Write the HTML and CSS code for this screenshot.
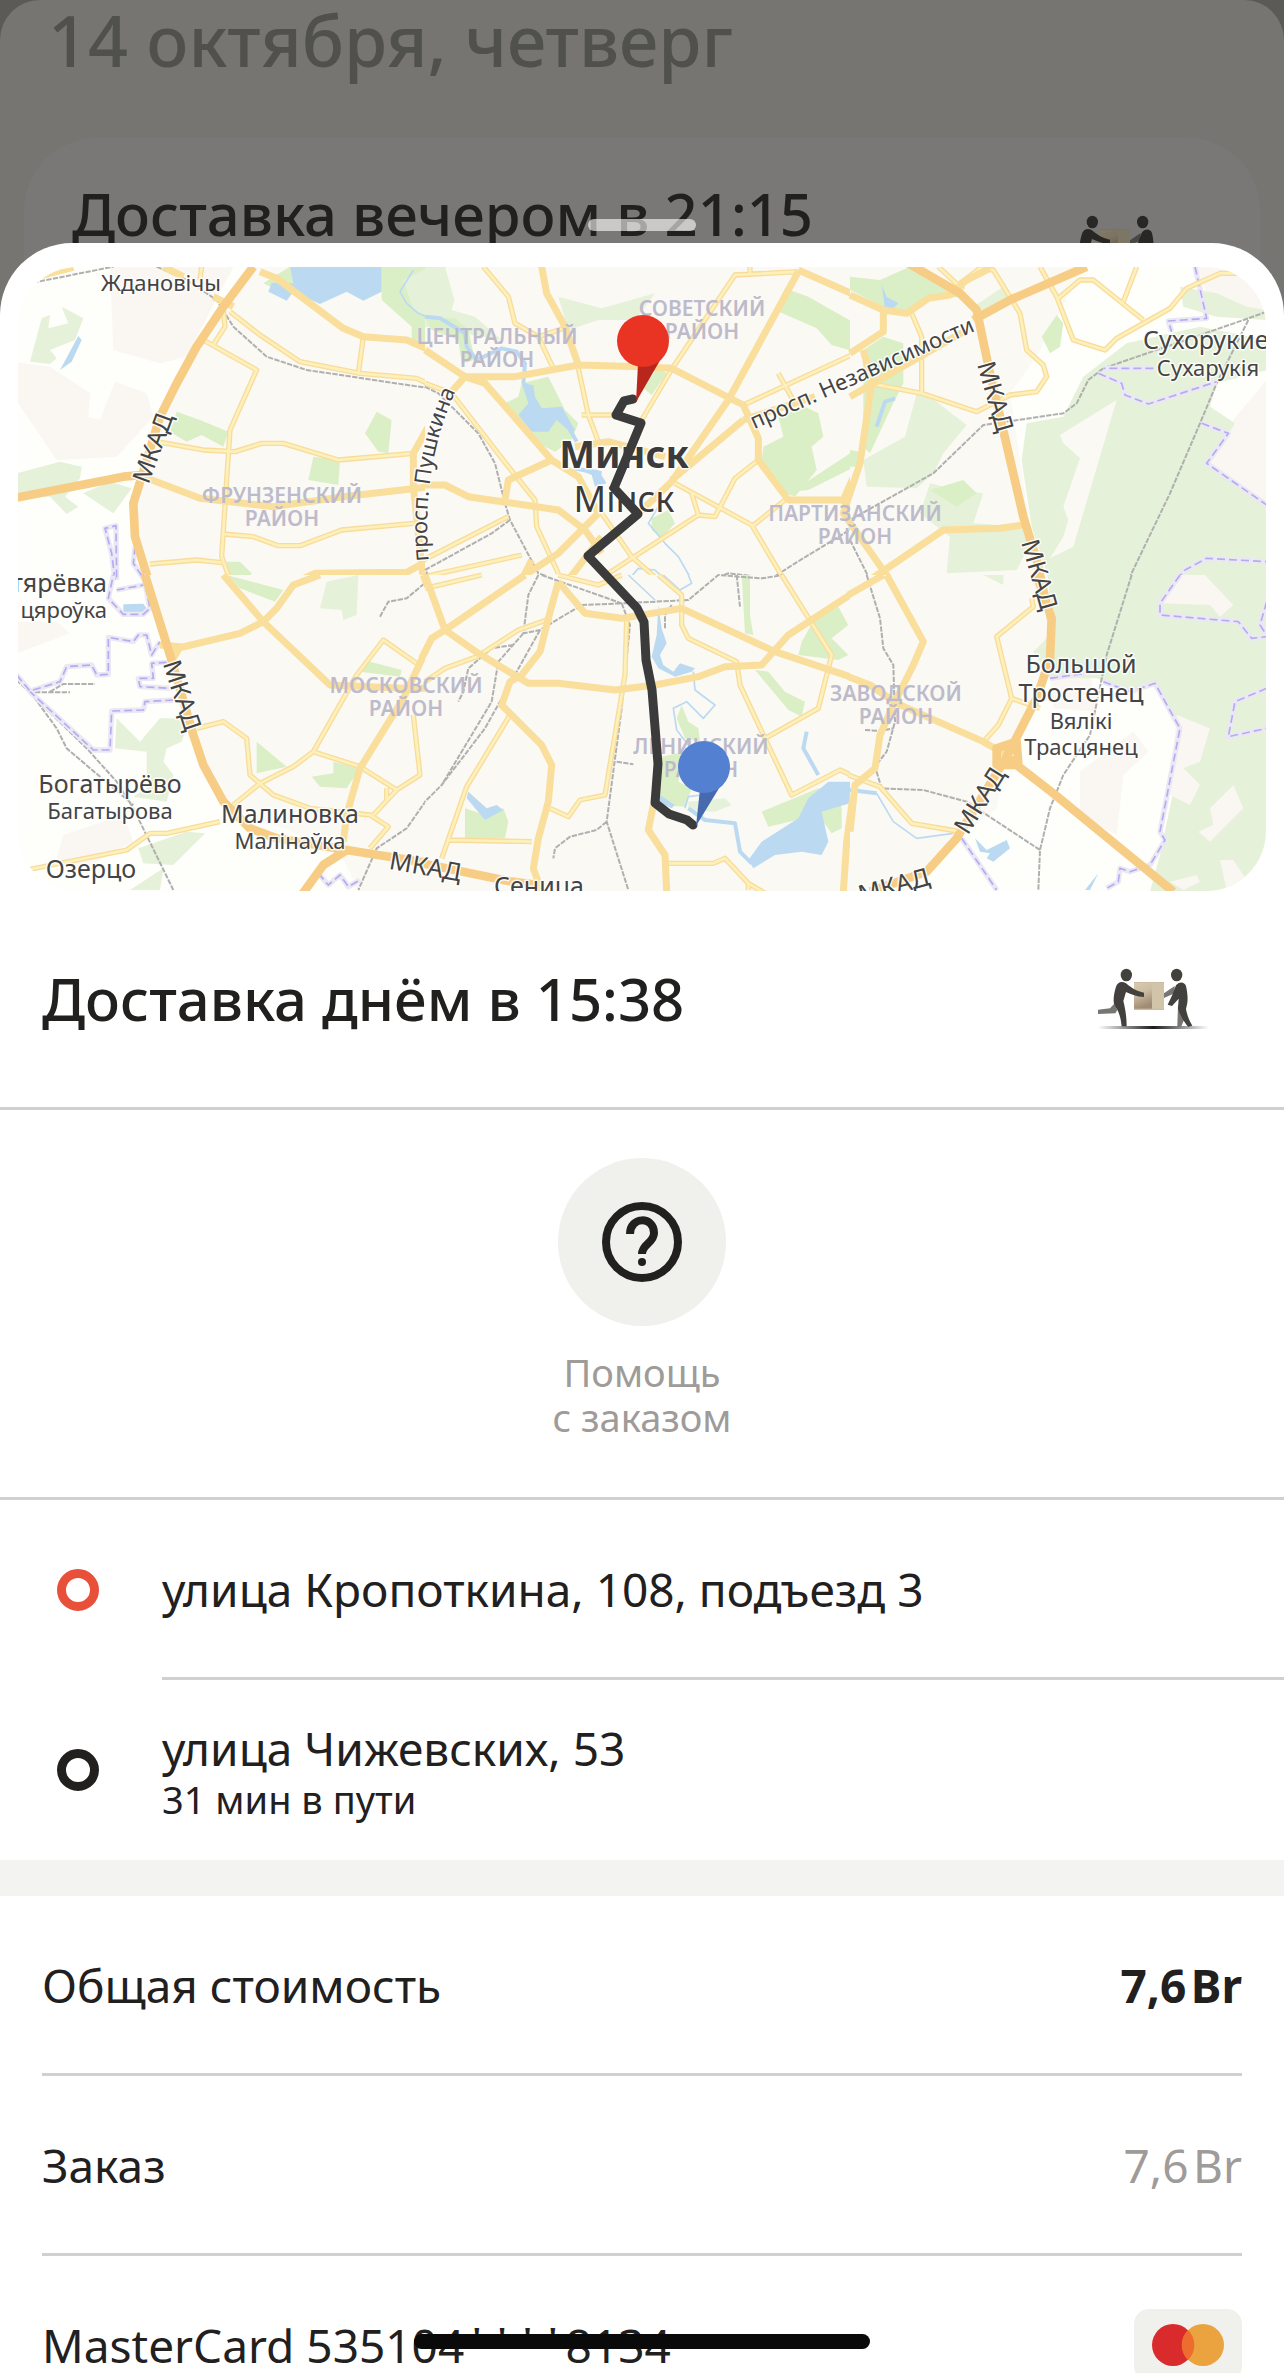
FILE: index.html
```html
<!DOCTYPE html>
<html lang="ru">
<head>
<meta charset="utf-8">
<meta name="viewport" content="width=device-width, initial-scale=1">
<title>Доставка</title>
<link rel="stylesheet" href="styles.css">
</head>
<body>
<svg class="defs" aria-hidden="true">
  <defs>
    <linearGradient id="boxFill" x1="0" y1="0" x2="0.3" y2="1"><stop offset="0" stop-color="#d8cab0"/><stop offset=".45" stop-color="#cdbea2"/><stop offset="1" stop-color="#a08c74"/></linearGradient>
    <linearGradient id="ground"><stop offset="0" stop-color="#222" stop-opacity="0"/><stop offset=".5" stop-color="#1c1b1a"/><stop offset="1" stop-color="#222" stop-opacity="0"/></linearGradient>
    <symbol id="couriers" viewBox="174 114 336 186">
      <path fill="#777672" d="M174 239 210 235 222 222 232 240 226 250 174 252ZM372 190 404 168 404 190 372 204ZM414 225 430 240 432 270 424 289H412Z"/>
      <path fill="#cbbd9f" d="M282 156H372V240H282Z"/>
      <path fill="url(#boxFill)" d="M282 159H336V236H282Z"/>
      <path fill="#d1c4a8" d="M336 159H372V236H336Z"/>
      <ellipse cx="259" cy="135" rx="17" ry="19" fill="#42413d"/>
      <ellipse cx="410" cy="135" rx="17" ry="19" fill="#42413d"/>
      <path fill="#42413d" d="M228 170C232 156 246 152 258 160 278 176 290 184 312 188V201C290 200 274 194 258 186L250 213C256 236 260 262 260 289H245C242 264 238 246 226 230 218 220 220 196 228 170ZM408 166C416 154 434 154 438 168 442 186 444 204 442 218L438 238C442 258 448 272 457 287L444 290C430 272 420 256 414 236L416 206 396 228 383 224Q398 196 408 166Z"/>
      <path fill="url(#ground)" d="M174 288H506V297H174Z"/>
    </symbol>

    <path id="minorA" d="M470 545 610 570 705 575 785 550 850 550 1015 600 1240 580M610 240 770 330 690 510 680 660 665 890 690 960M640 255 675 200 670 150M690 155 780 225 900 305 1080 340 1250 355 1300 378M1090 230 1075 340M670 822 760 830 835 857 900 857 1025 810 1240 790M450 912 590 900 665 908M605 20 600 60"/>
    <path id="minorB" d="M175 20 250 110 270 190 340 230 430 200M340 230 385 325M460 325 490 465 520 545M470 465H570M1060 340 1110 430M650 480 745 320 930 45 1120 35M975 20V40M0 370 80 400 250 620 330 720 335 800 400 940M-5 900 250 770M0 950 290 885M520 960 820 765 870 770 930 655 1000 600M750 670 980 795 1075 955M800 700 820 765M980 800 1080 720M955 435 1290 280M530 760 620 890 700 960"/>
    <path id="minorC" d="M185 160 215 230V400M60 370 215 400 380 455 480 405 560 395 590 350 580 315 530 270 510 160 430 30 390 25 330 70M570 20 620 110 670 240 765 270 800 235 960 145 1010 85 1110 40H1190M625 115 690 60H730L880 180M860 20 820 125M265 20 340 90"/>
    <path id="minorD" d="M590 460 670 440 740 490 750 600 820 660 930 700 1110 720 1165 755 1110 820M780 625 880 575 940 530 1070 300 1150 195 1250 265M940 530 1080 575 1190 645 1120 720M1190 645 1260 600 1240 420M80 885 380 825 450 775 500 775 660 740M700 690 780 625M1160 640V680"/>
    <path id="minorE" d="M0 40 170 0M400 0 520 30 590 0M700 0 770 60V150L790 190 935 260 945 330 1020 490 1180 400 1220 240 1070 0M1020 490 1100 660 1245 585 1290 605M605 130 600 300 540 660 465 675 430 725 375 700M0 320 60 280 155 245 280 165 380 130M255 420 125 635 50 850M70 795 320 800M720 865H865L900 850 970 925V945M970 925 1020 955"/>
    <path id="minorF" d="M-5 600 90 635 185 745 320 768M405 495 445 450 485 370 440 185 550 95 545 70M485 370 570 400"/>
  </defs>
</svg>

<main class="screen">
  <section class="history" aria-hidden="true">
    <h2 class="history-date">14 октября, четверг</h2>
    <div class="history-card">
      <h3 class="title">Доставка вечером в 21:15</h3>
      <svg class="couriers"><use href="#couriers"/></svg>
    </div>
  </section>

  <article class="sheet">
    <span class="grabber"></span>
    <svg class="map" viewBox="18 267 1248 624" role="img" aria-label="Маршрут доставки, Минск">
      <rect class="land" x="18" y="267" width="1248" height="624"/>

      <g transform="translate(0 260) scale(.333333)">
        <path class="soil" d="M0 300 150 320 270 400 265 470 300 480 345 365 440 400 460 470 350 590 170 600 55 430ZM330 20 700 20 560 290 480 310 340 270Z"/>
        <path class="city" d="M760 20H1290V960H450L400 800 430 650 500 420Z"/>
        <path class="wood" d="M90 305 125 175 150 165 145 205 205 190 185 140 250 175 225 240 150 270 170 295 150 312ZM50 640 180 605 245 620 240 655 195 710 235 740 200 762 150 710H50ZM250 700 330 665 395 685 340 760Z"/>
        <path class="park" d="M790 70 870 20 890 60 850 100ZM1145 20H1290V260H1235V200L1145 120ZM530 455 600 480 685 515 670 560 605 525 560 545 510 515ZM1130 455 1175 480 1165 580 1135 575 1095 520ZM940 590 1020 600 1015 675 925 660ZM680 905 720 905 755 940 740 965H680Z"/>
        <path class="wood" d="M1210 60 1290 20V170L1240 150Z"/>
        <path class="water" d="M870 20H1145V95L1090 122 1040 95 960 132 880 95 860 122 805 95 815 68 880 70ZM235 228 245 240 215 305 180 330Z"/>
        <path class="stream" d="M1240 30 1200 95 1220 130 1255 160 1290 175"/>
        <path class="rail" d="M80 72 340 20M470 20 560 60 650 120 700 200 800 290 920 330 1290 385"/>
        <path class="border-halo" d="M345 960 335 880 315 805 348 797 350 960M405 860 400 910 430 955"/>
        <path class="border" d="M345 960 335 880 315 805 348 797 350 960M405 860 400 910 430 955"/>
        <use href="#minorA" class="minor"/><use href="#minorA" class="minor-core"/>
        <path class="mid" d="M780 35 830 55 1030 205 1090 230 1220 240 1300 275M430 650 600 715 820 740 1030 710 1290 680M900 960 945 940 1220 937 1260 915M1240 680 1240 580 1290 490M1240 680 1270 960"/>
        <path class="mid" d="M110 50 220 22M490 20 550 50M640 110 700 140"/>
        <path class="major" d="M760 20 670 140 590 260 530 370 480 470 425 650 400 730 405 830 445 960 495 1130M50 713 370 650 425 645"/>
      </g>

      <g transform="translate(425 260) scale(.333333)">
        <path class="city" d="M0 20H1290V960H0Z"/>
        <path class="wood" d="M0 20H60L88 120 80 150 150 170 230 240 0 200ZM400 110 530 145 690 100 630 180 520 180 430 210Z"/>
        <path class="park" d="M0 170 90 175 130 210 150 300 110 310 100 240 20 210ZM290 370 370 350 420 450 460 490 440 540 390 575 330 545 240 430 280 410ZM700 320 725 340 680 405 655 385ZM1080 85 1150 110 1290 190V275L1220 255 1175 205 1050 150ZM1060 470 1140 440 1180 460 1195 530 1160 560 1175 630 1110 710 1080 700 1010 600 1015 560 1075 530ZM1100 695 1290 570V620L1150 690ZM680 775 730 750 750 790 710 835 680 810Z"/>
        <path class="water" d="M290 370 325 375 330 410 350 445 410 440 450 510 440 520 395 480 370 515 320 515 280 465 310 430ZM440 620 520 630 545 670 510 680 500 645Z"/>
        <path class="river" d="M0 170 45 175 120 220 125 260 155 300 230 265 275 275 300 310 295 370M300 370 320 430 340 490 380 460 430 500 455 545M445 625 530 640"/>
        <path class="stream" d="M700 740 670 790 720 850 760 890 800 960M610 960 640 925 690 930 720 960"/>
        <path class="rail" d="M0 380 40 400 160 520 210 610 240 730 255 780 340 940 400 960M255 780 200 820 0 930M860 960 910 940 1040 955 1110 910 1290 800"/>
        <use href="#minorB" class="minor"/><use href="#minorB" class="minor-core"/>
        <path class="mid" d="M350 20 365 100 420 200 460 315 650 320 740 325 955 435 1000 535V600L1090 720H1255L1290 640M0 270 120 350 270 350 460 315M80 395 120 350 180 370 250 450 380 600 460 650 520 760M380 600 250 660 240 720M450 560 550 545 720 590M740 660 955 480M1120 35 910 420 740 665 640 760M1120 30 1290 105M955 480 1170 410M0 675H60L130 710 400 750 480 810 530 880M520 760 400 880 300 945 320 960M290 960 320 900M530 830 430 960M1255 720 1290 770"/>
      </g>

      <g transform="translate(850 260) scale(.333333)">
        <path class="city" d="M0 20H700L560 290 480 400 540 800 600 960H0Z"/>
        <path class="soil" d="M1040 20H1250V160L1150 170 1080 130ZM1150 480 1250 360V740L1080 610Z"/>
        <path class="wood" d="M700 350 830 250 1050 200 1250 240V330L1100 370 1080 440 1155 490 1080 610 1250 735V970H600L545 800 515 600 530 490 640 470ZM200 400 240 410 350 495 280 580 250 640 200 685 50 680 40 600 165 530ZM990 80 1100 100 1190 140 1250 150V180L1100 170 1000 140ZM210 760 240 670 320 690 400 700 370 790 520 800 540 850 500 930 290 940 300 830ZM370 140 460 80 480 120 440 150 390 160Z"/>
        <path class="city" d="M800 420 630 525 640 550 690 595 640 740 655 780 640 830 600 895 670 860Z"/>
        <path class="park" d="M0 50 90 60 180 20 330 110 240 120 180 165 100 140 0 90ZM40 270 100 230 160 250V370L130 430 60 580 40 560ZM575 230 620 165 640 190 630 260 600 280ZM0 570 30 575V620H0ZM240 690 340 660 380 700 320 740Z"/>
        <path class="water" d="M95 75 110 110 145 130 130 145 105 145Z"/>
        <path class="river" d="M135 415 105 425 80 500"/>
        <path class="rail" d="M1250 155 1195 175 760 325 715 360 680 430 640 460 400 495 250 640 0 780M1195 180 1100 370 1050 490 960 700 835 960M0 840 60 960"/>
        <path class="border-halo" d="M1035 20 1070 175 955 183 965 215M910 325 760 325M745 340 815 370 825 405 895 432 1100 365M1055 490 1135 520 1070 610 1250 735M980 960 1005 930 1070 895 1250 905"/>
        <path class="border" d="M1035 20 1070 175 955 183 965 215M910 325 760 325M745 340 815 370 825 405 895 432 1100 365M1055 490 1135 520 1070 610 1250 735M980 960 1005 930 1070 895 1250 905"/>
        <use href="#minorC" class="minor"/><use href="#minorC" class="minor-core"/>
        <path class="mid" d="M0 105 100 150 170 160 235 115 300 105 350 60 420 25M100 150V215L0 280M40 270 65 370 30 610 -20 760 120 960M60 960 280 810 450 805 520 795M0 410 350 210"/>
        <path class="major" d="M175 10 330 100 380 150 420 340 520 770 560 900 600 1080M370 180 480 120 710 20"/>
      </g>

      <g transform="translate(0 575) scale(.333333)">
        <path class="city" d="M430 0H1290V960H1080L1020 830 680 690 560 430 510 250Z"/>
        <path class="soil" d="M50 140 170 140 210 175 50 235ZM190 780 370 720 400 800 250 880 170 850Z"/>
        <path class="wood" d="M350 430 420 500 480 430 570 430 545 500 500 520 490 560 520 600 500 680 400 665 440 640 440 530 345 520ZM415 820 560 770 615 775 520 870 430 865ZM490 880 480 945H390ZM980 20 1075 0 1070 120 1030 135 1025 105 960 100Z"/>
        <path class="park" d="M680 0 850 45 825 80 720 40ZM770 500 860 575 770 595ZM1000 560 1080 580 1040 640 960 635 935 605 1000 595ZM1110 260 1205 285 1200 305 1080 290Z"/>
        <path class="water" d="M370 88 430 86 440 100 430 115 370 115Z"/>
        <path class="rail" d="M50 315 260 520 350 620 400 700 520 945M90 350 170 460 200 520 400 690M105 352H210M150 350 190 327H285M1290 660 1220 760 1130 820 1075 945M1140 125 1165 80 1220 70 1280 20V-15"/>
        <path class="border-halo" d="M430 0 450 100 430 118 370 118 325 70 340 0M350 45 430 30M50 300 90 348 180 320 200 275 275 270 290 300 325 298V187L400 200 415 180 440 180 455 240 480 200M500 262 455 265 460 310 415 310 420 335 515 340M520 375 435 380 430 405 335 408 330 525H280L90 350M955 895 985 930 1020 900 1045 935 1080 915"/>
        <path class="border" d="M430 0 450 100 430 118 370 118 325 70 340 0M350 45 430 30M50 300 90 348 180 320 200 275 275 270 290 300 325 298V187L400 200 415 180 440 180 455 240 480 200M500 262 455 265 460 310 415 310 420 335 515 340M520 375 435 380 430 405 335 408 330 525H280L90 350M955 895 985 930 1020 900 1045 935 1080 915"/>
        <use href="#minorD" class="minor"/><use href="#minorD" class="minor-core"/>
        <path class="mid" d="M670 0 790 140 990 330 1210 340 1290 340M510 225 720 175 790 140 830 100 880 30 960 0M1300 180 1210 370 1080 580 1040 720 1030 800M1270 0 1300 80M480 210 540 215 520 250"/>
        <path class="major" d="M435 0 510 240 580 480 610 570 670 680 750 760 830 790 1040 825 1290 865 1550 925M1040 825 970 870 905 960"/>
      </g>

      <g transform="translate(425 575) scale(.333333)">
        <path class="city" d="M0 0H1290V950H0Z"/>
        <path class="park" d="M950 0H975V120L985 180 960 175ZM1130 200 1170 130 1240 95 1270 150 1220 190 1270 240 1240 255 1120 240ZM990 285 1030 290 1080 350 1140 380 1130 425 1090 405ZM770 390 790 440 820 460 825 500 780 490 755 430ZM710 545 780 530 760 620 800 640 780 695 700 690ZM120 700 180 720 235 700 250 740 240 790H120ZM1010 710 1180 640 1230 650 1250 700V760L1220 775 1180 720 1030 755Z"/>
        <path class="wood" d="M790 680 900 670 920 690 870 710 790 705Z"/>
        <path class="water" d="M130 650 185 700 215 690 235 705 180 735 125 670ZM700 90 710 160 725 205 705 240 715 270 745 290 765 265 810 280 800 290 750 305 700 280 680 245 695 180ZM1150 670 1210 620 1290 620V680L1190 710 1210 800 1190 840 1130 830 1050 840 985 880 970 855 1010 800 1120 730ZM705 660 750 690 740 700 700 680Z"/>
        <path class="river" d="M790 700 840 735 930 745 945 830 980 865M1145 470 1135 520 1180 600"/>
        <path class="stream" d="M610 0 690 75M715 0 765 45 800 25 790 0M805 290 810 345 870 390 835 430 785 380 745 400 755 465 790 510M780 700 790 665 830 660"/>
        <path class="rail" d="M350 0 590 85 790 75 880 0 1010 10 1075 0M740 90 720 120V160M340 0 310 60 295 175 345 165 470 90 590 85 615 150 590 400 545 740 610 945M345 165 180 460 50 630 0 680M295 175 220 260 200 380 50 630M265 210 200 220 130 280 115 350 100 380M545 740 515 765 435 785 390 820 385 850M575 560 625 568M935 0 945 95"/>
        <use href="#minorE" class="minor"/><use href="#minorE" class="minor-core"/>
        <path class="mid" d="M0 0 60 165 160 235 310 325 400 325 570 345 690 330 820 305 900 275 1010 270 1090 180 1290 50M-10 250 20 190 60 165 300 0M400 20 370 130 345 230 290 300 255 320 230 390 350 510 380 570 370 680 340 790 325 880 350 950M400 20 480 115 590 130 770 100 1050 230 1290 310M685 690 670 765 720 840 725 950M1290 620 1265 800 1255 950"/>
        <path class="major" d="M-10 865 260 920 340 930"/>
      </g>

      <g transform="translate(850 575) scale(.333333)">
        <path class="city" d="M0 0H570L610 260 480 500 440 700 340 780 230 900 0 950Z"/>
        <path class="soil" d="M690 590 850 470 895 530 820 600 800 780 690 720ZM600 310 720 290 740 410 610 400Z"/>
        <path class="wood" d="M595 0H1250V950H900L930 840 980 600 990 460 915 320 840 350 740 310 600 310 550 230 600 180ZM400 0H460V30Z"/>
        <path class="soil" d="M985 0H1065L1150 90 1110 125 1080 90 930 85ZM980 420 1080 460 1050 560 1000 580 1050 630 1020 690 960 660ZM1150 630 1180 700 1080 800 1045 770 1090 750 1080 700ZM1110 855H1150L1190 915 1130 945ZM960 920 1040 900 1050 920 1000 945Z"/>
        <path class="water" d="M375 790 410 825 470 795 480 820 430 860 410 850 420 835 390 830ZM745 895 720 945H705Z"/>
        <path class="river" d="M0 645 80 655"/>
        <path class="stream" d="M80 655 130 740 200 790 310 775"/>
        <path class="rail" d="M50 0 90 130 100 220 130 270 135 440 110 530 75 575 95 640 220 645 350 680 570 825M845 0 770 240 720 480 640 600 600 700 570 825 565 945M45 465 90 468 130 460"/>
        <path class="border-halo" d="M990 0 930 85V120L1165 140 1205 190 1250 185M1250 80 1230 150 1250 180M600 310 740 290M760 320 840 350 915 325 990 460 930 770 945 795 900 870 840 890 810 880 805 920 770 940M1250 340 1155 380 1135 485 1250 460M335 790 440 945"/>
        <path class="border" d="M990 0 930 85V120L1165 140 1205 190 1250 185M1250 80 1230 150 1250 180M600 310 740 290M760 320 840 350 915 325 990 460 930 770 945 795 900 870 840 890 810 880 805 920 770 940M1250 340 1155 380 1135 485 1250 460M335 790 440 945"/>
        <use href="#minorF" class="minor"/><use href="#minorF" class="minor-core"/>
        <path class="mid" d="M-5 305 60 330 140 385 400 500 470 540M-5 60 100 0M110 0 220 200 190 270 130 390 90 480 75 580 15 630 0 770"/>
        <path class="major" d="M560 0 605 130 600 250 560 370 470 545 400 660 320 790 230 890 60 950M470 545 500 570 610 655 970 950M440 520 500 500 505 570 440 570Z"/>
      </g>

      <g class="place">
        <text x="161" y="291">Ждановічы</text><text x="126" y="264">Ждановичи</text>
        <text class="place-lg" x="107" y="592" text-anchor="end">тярёвка</text><text x="107" y="618" text-anchor="end">цяроўка</text>
        <text class="place-lg" x="110" y="793">Богатырёво</text><text x="110" y="819">Багатырова</text>
        <text class="place-lg" x="290" y="823">Малиновка</text><text x="290" y="849">Малінаўка</text>
        <text class="place-lg" x="91" y="878">Озерцо</text><text x="91" y="905">Азярцо</text>
        <text class="place-lg" x="539" y="895">Сеница</text>
        <text class="place-lg place-start" x="1143" y="349">Сухорукие</text><text x="1208" y="376">Сухарукія</text>
        <text class="place-lg" x="1081" y="673">Большой</text><text class="place-lg" x="1081" y="702">Тростенец</text>
        <text x="1081" y="729">Вялікі</text><text x="1081" y="755">Трасцянец</text>
      </g>
      <g class="district">
        <text x="497" y="344">ЦЕНТРАЛЬНЫЙ</text><text x="497" y="367">РАЙОН</text>
        <text x="702" y="316">СОВЕТСКИЙ</text><text x="702" y="339">РАЙОН</text>
        <text x="282" y="503">ФРУНЗЕНСКИЙ</text><text x="282" y="526">РАЙОН</text>
        <text x="855" y="521">ПАРТИЗАНСКИЙ</text><text x="855" y="544">РАЙОН</text>
        <text x="406" y="693">МОСКОВСКИЙ</text><text x="406" y="716">РАЙОН</text>
        <text x="896" y="701">ЗАВОДСКОЙ</text><text x="896" y="724">РАЙОН</text>
        <text x="701" y="754">ЛЕНИНСКИЙ</text><text x="701" y="777">РАЙОН</text>
      </g>
      <g class="road-name">
        <text transform="translate(161 451) rotate(-70)">МКАД</text>
        <text transform="translate(174 698) rotate(72)">МКАД</text>
        <text transform="translate(987 399) rotate(74)">МКАД</text>
        <text transform="translate(1031 577) rotate(74)">МКАД</text>
        <text transform="translate(987 805) rotate(-58)">МКАД</text>
        <text transform="translate(424 875) rotate(10)">МКАД</text>
        <text transform="translate(896 894) rotate(-15)">МКАД</text>
      </g>
      <g class="street-name">
        <text transform="translate(865 380) rotate(-24)">просп. Независимости</text>
        <path id="pushkin" fill="none" d="M429 562Q420 470 456 390"/>
        <text><textPath href="#pushkin" startOffset="50%">просп. Пушкина</textPath></text>
      </g>
      <text class="city-name" x="624" y="468">Минск</text>
      <text class="city-name-alt" x="624" y="512">Мінск</text>

      <path class="route" d="M633 399 624 401 616 415 641 423 614 488 638 514 588 556 637 608 644 622 646 660 652 690 658 764 655 803 669 814 687 820 693 825"/>
      <path fill="#b9261b" d="M638 364 662 357 636 402Z"/><circle cx="643" cy="341" r="26" fill="#e93424"/>
      <path fill="#4769ad" d="M700 789 724 780 696 826Z"/><circle cx="704" cy="767" r="26" fill="#5480d2"/>
    </svg>

    <header class="summary">
      <h1 class="title">Доставка днём в 15:38</h1>
      <svg class="couriers" aria-hidden="true"><use href="#couriers"/></svg>
    </header>

    <div class="support">
      <button class="help" type="button">
        <span class="help-icon">
          <svg viewBox="0 0 80 80" aria-hidden="true"><circle cx="40" cy="40" r="36" fill="none" stroke="#21201f" stroke-width="8"/><path d="M28 32C28 14 52 14 52 31 52 41 40 42 40 52" fill="none" stroke="#21201f" stroke-width="8"/><circle cx="40" cy="60" r="4" fill="#21201f"/></svg>
        </span>
        <span>Помощь<br>с заказом</span>
      </button>
    </div>

    <ul class="stops">
      <li class="stop"><span class="ring ring-from"></span><div class="stop-text"><p>улица Кропоткина, 108, подъезд 3</p></div></li>
      <li class="stop"><span class="ring"></span><div class="stop-text"><p>улица Чижевских, 53</p><p class="stop-note">31 мин в пути</p></div></li>
    </ul>

    <dl class="bill">
      <div class="bill-row"><dt>Общая стоимость</dt><dd class="total">7,6&#8202;Br</dd></div>
      <div class="bill-row"><dt>Заказ</dt><dd class="muted">7,6&#8202;Br</dd></div>
      <div class="bill-row"><dt>MasterCard 535104****8134</dt><dd class="card-badge"><svg viewBox="0 0 108 72" role="img" aria-label="MasterCard"><circle cx="39" cy="36" r="21" fill="#d92b2b"/><circle cx="69" cy="36" r="21" fill="#eaa33e"/><path fill="#ee6c2e" d="M54 21A21 21 0 0 1 54 51 21 21 0 0 1 54 21Z"/></svg></dd></div>
    </dl>
  </article>
  <span class="home-indicator"></span>
</main>
</body>
</html>
```

FILE: styles.css
```css
* { box-sizing: border-box; }
body, h1, h2, h3, p, ul, dl, dd { margin: 0; padding: 0; }
body {
  background: #5b5a57;
  color: #21201f;
  font-family: "Noto Sans", "Open Sans", sans-serif;
  font-size: 46px;
  line-height: 58px;
}
.defs { position: absolute; width: 0; height: 0; }
.screen {
  position: relative;
  height: 100vh;
  overflow: hidden;
}

/* dimmed list behind the sheet */
.history {
  height: 320px;
  padding: 0 24px;
  border-radius: 40px 40px 0 0;
  background: #767572;
}
.history-date {
  height: 138px;
  padding-left: 24px;
  color: #50504c;
  font-size: 70px;
  line-height: 80px;
  font-weight: 500;
}
.history-card {
  display: flex;
  justify-content: space-between;
  align-items: flex-start;
  height: 182px;
  padding: 36px 84px 0 48px;
  border-radius: 72px 72px 0 0;
  background: #7a7876;
}
.history-card .couriers { margin-top: 41px; filter: brightness(.6); }

.title {
  font-size: 58px;
  line-height: 80px;
  font-weight: 500;
}
.couriers { width: 112px; height: 62px; }

.sheet {
  position: relative;
  margin-top: -77px;
  padding-top: 24px;
  border-radius: 72px 72px 0 0;
  background: #fff;
}
.grabber {
  position: absolute;
  top: -24px;
  left: 50%;
  width: 108px;
  height: 12px;
  margin-left: -54px;
  border-radius: 6px;
  background: #ffffff99;
}

.map {
  display: block;
  width: calc(100% - 36px);
  margin: 0 18px;
  border-radius: 60px;
}
.land { fill: #fefefa; }
.city { fill: #fbf9f4; }
.soil { fill: #faf6f1; }
.wood { fill: #e5f1d8; }
.park { fill: #dbefc7; }
.water { fill: #bbdaf2; }
.river, .stream { fill: none; stroke: #bbdaf2; stroke-width: 12; stroke-linejoin: round; }
.stream { stroke-width: 5; }
.rail { fill: none; stroke: #b0b0b0; stroke-width: 6; stroke-dasharray: 16 4; }
.border, .border-halo { fill: none; stroke: #ebe8f6; stroke-width: 16; stroke-linejoin: round; }
.border { stroke: #b6abef; stroke-width: 5; stroke-dasharray: 24 12; }
.minor, .minor-core, .mid, .major { fill: none; stroke-linejoin: round; }
.minor { stroke: #f8dc9c; stroke-width: 16; }
.minor-core { stroke: #fdf0b9; stroke-width: 8; }
.mid { stroke: #f9de9c; stroke-width: 21; }
.major { stroke: #f7cd85; stroke-width: 26; }
.route { fill: none; stroke: #3b3b3b; stroke-width: 9; stroke-linejoin: round; stroke-linecap: round; }
.map text { paint-order: stroke; stroke: #fffd; stroke-width: 3px; stroke-linejoin: round; }
.place text { fill: #444; font-size: 22px; text-anchor: middle; }
.place text[text-anchor="end"] { text-anchor: end; }
.place .place-lg { font-size: 25px; }
.place .place-start { text-anchor: start; }
.map .district text { fill: #bdbbcb; font-size: 21px; font-weight: 600; text-anchor: middle; stroke: none; }
.road-name text { fill: #444; font-size: 25px; text-anchor: middle; }
.street-name text { fill: #444; font-size: 22px; text-anchor: middle; }
.map .city-name, .map .city-name-alt { fill: #3b3b3b; font-size: 38px; font-weight: 700; text-anchor: middle; }
.map .city-name-alt { font-size: 36px; font-weight: 400; }

.summary {
  display: flex;
  justify-content: space-between;
  align-items: center;
  height: 219px;
  padding: 0 74px 0 42px;
  border-bottom: 3px solid #d2d0cc;
}
.support {
  display: flex;
  justify-content: center;
  padding: 48px 0 57px;
  border-bottom: 3px solid #d2d0cc;
}
.help {
  display: flex;
  flex-direction: column;
  align-items: center;
  gap: 24px;
  padding: 0;
  border: 0;
  background: none;
  color: #9e9b98;
  font: 38px/45px "Noto Sans", "Open Sans", sans-serif;
}
.help-icon {
  display: grid;
  place-items: center;
  width: 168px;
  height: 168px;
  border-radius: 50%;
  background: #f0f0ec;
}
.help-icon svg { width: 80px; height: 80px; }

.stops {
  list-style: none;
  border-bottom: 36px solid #f3f3f1;
}
.stop {
  display: flex;
  align-items: center;
  gap: 63px;
  height: 180px;
  padding-left: 57px;
}
.ring {
  width: 42px;
  height: 42px;
  border: 9px solid #21201f;
  border-radius: 50%;
}
.ring-from { border-color: #e8503a; }
.stop-text {
  display: flex;
  flex: 1;
  flex-direction: column;
  justify-content: center;
  height: 100%;
}
.stop:first-child .stop-text { border-bottom: 3px solid #d2d0cc; }
.stop-note { font-size: 38px; line-height: 45px; }

.bill { padding: 0 42px; }
.bill-row {
  display: flex;
  justify-content: space-between;
  align-items: center;
  height: 180px;
  border-bottom: 3px solid #d2d0cc;
}
.total { font-weight: 700; }
.muted { color: #9e9b98; }
.card-badge {
  width: 108px;
  height: 72px;
  border-radius: 15px;
  background: #f0f0ec;
}
.card-badge svg { display: block; }

.home-indicator {
  position: absolute;
  bottom: 24px;
  left: 50%;
  width: 456px;
  height: 15px;
  margin-left: -228px;
  border-radius: 8px;
  background: #0a0a0a;
}
```
